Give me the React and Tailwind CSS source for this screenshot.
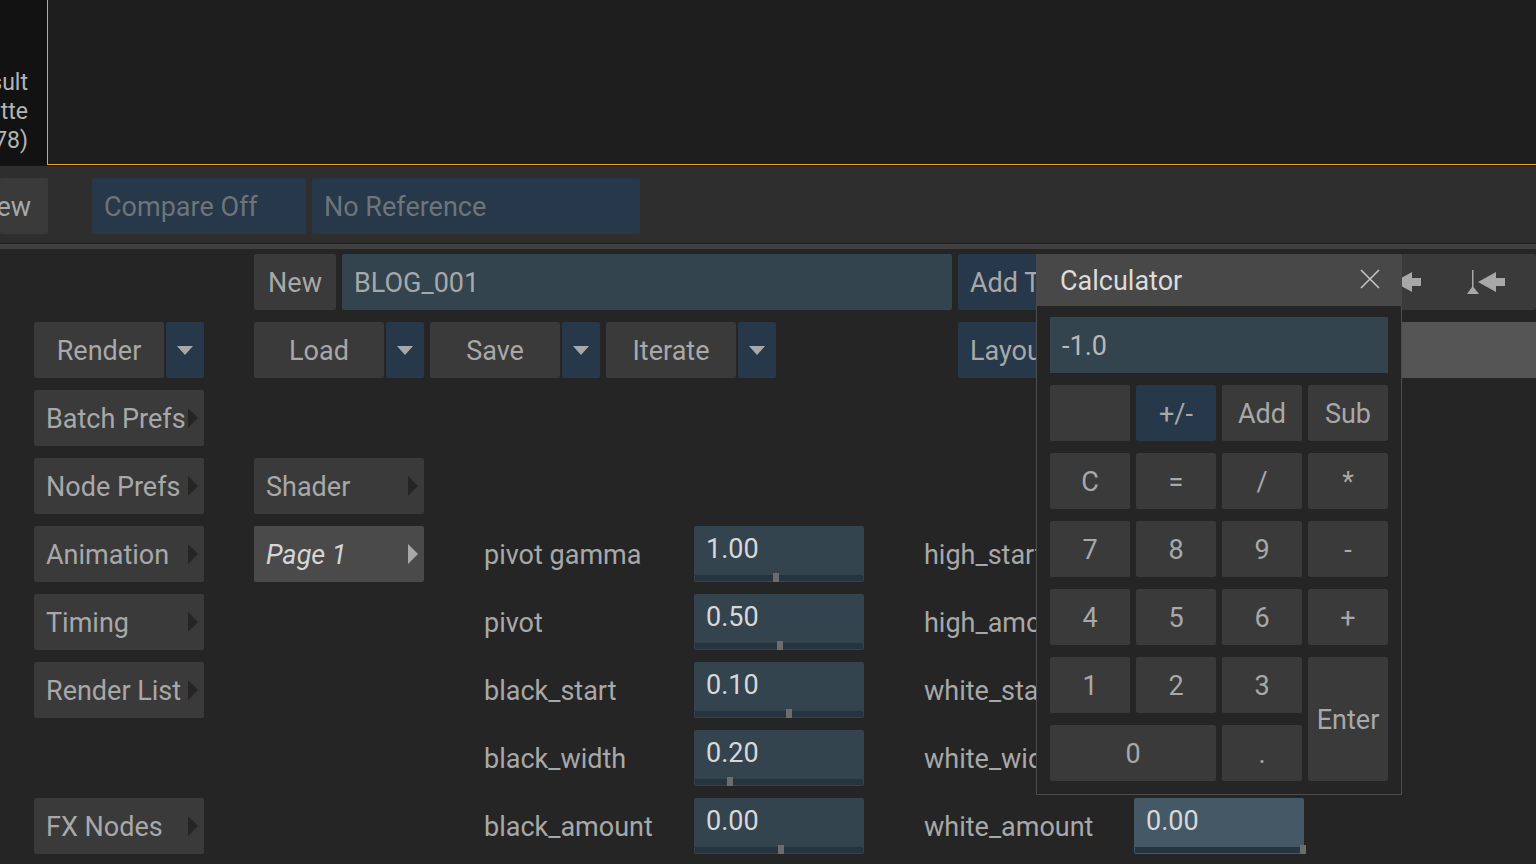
import React from 'react';

const font = { fontFamily: 'Roboto, "Noto Sans", sans-serif' };

function Btn({ children, className = '' }) {
  return (
    <div className={`h-14 shrink-0 rounded-[2px] bg-[#3a3a3a] flex items-center justify-center pt-[2px] text-[27px] text-[#a8a8a8] ${className}`}>
      {children}
    </div>
  );
}

function Arrow({ className = '' }) {
  return (
    <div className={`h-14 w-[38px] shrink-0 rounded-[2px] bg-[#26384a] flex items-center justify-center ${className}`}>
      <div className="w-0 h-0 border-l-[8px] border-r-[8px] border-t-[9px] border-l-transparent border-r-transparent border-t-[#a8a8a8]" />
    </div>
  );
}

function SplitBtn({ label }) {
  return (
    <div className="flex gap-[2px] w-[170px] shrink-0">
      <Btn className="w-[130px]">{label}</Btn>
      <Arrow />
    </div>
  );
}

function MenuBtn({ label, active }) {
  return (
    <div className={`h-14 w-[170px] shrink-0 rounded-[2px] flex items-center justify-between pl-3 pr-[6px] text-[27px] ${active ? 'bg-[#4a4a4a] text-[#d6d6d6] italic' : 'bg-[#3a3a3a] text-[#a8a8a8]'}`}>
      <span className="pt-[2px]">{label}</span>
      <span className={`w-0 h-0 mb-[1px] border-t-[10px] border-b-[10px] border-l-[10px] border-t-transparent border-b-transparent ${active ? 'border-l-[#a8a8a8]' : 'border-l-[#252525]'}`} />
    </div>
  );
}

function Field({ value, pos, active }) {
  return (
    <div className={`relative h-14 w-[170px] shrink-0 rounded-[2px] ${active ? 'bg-[#445866]' : 'bg-[#33444f]'} text-[27px] leading-[47px] pl-3 text-[#d8d8d8]`}>
      {value}
      <div className="absolute left-[1px] right-[1px] bottom-[1px] h-[6px] bg-[#25343f]" />
      <div className="absolute bottom-0 w-[6px] h-[9px] bg-[#6c6c6c]" style={{ left: pos }} />
    </div>
  );
}

function ParamRow({ a, av, ap, b, bv, bp, bactive, extra }) {
  return (
    <div className="flex items-center h-14">
      <div className="w-[210px] shrink-0 pt-[2px] text-[#a8a8a8]">{a}</div>
      <Field value={av} pos={ap} />
      <div className="w-[210px] shrink-0 ml-[60px] pt-[2px] text-[#a8a8a8]">{b}</div>
      {bv && <Field value={bv} pos={bp} active={bactive} />}
      {extra && <div className="ml-[86px] pt-[2px] text-[#a8a8a8]">{extra}</div>}
    </div>
  );
}

const keys = [
  ['', '+/-', 'Add', 'Sub'],
  ['C', '=', '/', '*'],
  ['7', '8', '9', '-'],
  ['4', '5', '6', '+'],
];

function Calculator() {
  return (
    <div className="absolute left-[1036px] top-[254px] w-[366px] h-[541px] border border-[#4c4c4c] bg-[#252525] flex flex-col">
      <div className="h-[52px] shrink-0 -mx-[1px] -mt-[1px] bg-[#484848] flex items-center justify-between pl-6 pr-[22px] text-[27px] text-[#dcdcdc]">
        <span className="pt-[3px]">Calculator</span>
        <svg width="20" height="20" viewBox="0 0 20 20" className="mb-[2px]" fill="none" stroke="#c4c4c4" strokeWidth="1.6">
          <path d="M1 1 L19 19 M19 1 L1 19" />
        </svg>
      </div>
      <div className="px-[13px] pt-[11px]">
        <div className="h-14 bg-[#33444f] flex items-center pl-3 pt-[2px] text-[27px] text-[#b8b8b8]">-1.0</div>
        <div className="mt-3 grid grid-cols-4 gap-x-[6px] gap-y-3">
          {keys.flat().map((k, i) => (
            <Btn key={i} className={k === '+/-' ? 'bg-[#26384a]' : ''}>{k}</Btn>
          ))}
          <Btn>1</Btn>
          <Btn>2</Btn>
          <Btn>3</Btn>
          <Btn className="row-span-2 h-full">Enter</Btn>
          <Btn className="col-span-2">0</Btn>
          <Btn>.</Btn>
        </div>
      </div>
    </div>
  );
}

export default function App() {
  return (
    <div className="relative w-[1536px] h-[864px] overflow-hidden flex flex-col bg-[#252525] whitespace-nowrap" style={font}>
      {/* Viewer */}
      <div className="h-[166px] shrink-0 flex bg-[#1e1e1e] border-b border-[#141414]">
        <div className="w-[47px] shrink-0 bg-[#121212] flex flex-col items-end justify-end pr-[19px] pb-[10px] text-[23px] leading-[29px] text-[#b4b4b4]">
          <span>Result</span>
          <span>Matte</span>
          <span>(1.78)</span>
        </div>
        <div className="flex-1 border-l border-b border-[#eba51f]" />
      </div>

      {/* Toolbar */}
      <div className="h-[77px] shrink-0 bg-[#2e2e2e] flex items-start pt-3">
        <Btn className="w-[48px] justify-end pr-[17px]">Preview</Btn>
        <div className="ml-[44px] h-14 w-[214px] rounded-[2px] bg-[#26384a] pl-3 pt-[2px] flex items-center text-[27px] text-[#6e7478]">Compare Off</div>
        <div className="ml-[6px] h-14 w-[328px] rounded-[2px] bg-[#26384a] pl-3 pt-[2px] flex items-center text-[27px] text-[#6e7478]">No Reference</div>
      </div>
      <div className="h-[6px] shrink-0 bg-[#404040] border-t border-[#1e1e1e]" />

      {/* Panel */}
      <div className="flex-1 flex pl-[34px] pt-[5px] gap-[50px]">
        <div className="flex flex-col gap-3 w-[170px] shrink-0">
          <div className="h-14" />
          <SplitBtn label="Render" />
          <MenuBtn label="Batch Prefs" />
          <MenuBtn label="Node Prefs" />
          <MenuBtn label="Animation" />
          <MenuBtn label="Timing" />
          <MenuBtn label="Render List" />
          <div className="h-14" />
          <MenuBtn label="FX Nodes" />
        </div>

        <div className="flex-1 flex flex-col gap-3 min-w-0 text-[27px]">
          <div className="flex gap-[6px]">
            <Btn className="w-[82px]">New</Btn>
            <div className="h-14 w-[610px] rounded-[2px] bg-[#33444f] flex items-center pl-3 pt-[2px] text-[#a8a8a8]">BLOG_001</div>
            <div className="h-14 w-[170px] rounded-[2px] bg-[#26384a] flex items-center pl-3 pt-[2px] text-[#a8a8a8]">Add To Batch</div>
            <div className="h-14 w-[44px] ml-[174px] rounded-[2px] bg-[#26384a]" />
            <div className="relative h-14 flex-1 ml-[5px] rounded-[2px] bg-[#3a3a3a] flex items-center justify-end gap-[47px] pr-[31px]">
              <svg width="27" height="20" viewBox="0 0 27 20" fill="#a8a8a8" className="mb-[1px]">
                <path d="M0 10 L18 0 V6 H27 V14 H18 V20 Z" />
              </svg>
              <svg width="38" height="24" viewBox="0 0 38 24" fill="#a8a8a8" className="ml-[-1px]">
                <path d="M5 0 H6.5 V17 L12 24 H0 L5 17 Z" />
                <path d="M11 12 L29 2 V8 H38 V16 H29 V22 Z" />
              </svg>
            </div>
          </div>
          <div className="flex gap-[6px]">
            <SplitBtn label="Load" />
            <SplitBtn label="Save" />
            <SplitBtn label="Iterate" />
            <div className="h-14 flex-1 ml-[176px] flex">
              <div className="w-[100px] rounded-[2px] bg-[#26384a] flex items-center pl-3 pt-[2px] text-[#a8a8a8]">Layout</div>
              <div className="flex-1 bg-[#555555]" />
            </div>
          </div>
          <div className="h-14" />
          <MenuBtn label="Shader" />
          <div className="flex gap-[60px]">
            <MenuBtn label="Page 1" active />
            <div className="flex flex-col gap-3">
              <ParamRow a="pivot gamma" av="1.00" ap="79px" b="high_start" extra="Range Mode" />
              <ParamRow a="pivot" av="0.50" ap="83px" b="high_amount" />
              <ParamRow a="black_start" av="0.10" ap="92px" b="white_start" />
              <ParamRow a="black_width" av="0.20" ap="33px" b="white_width" />
              <ParamRow a="black_amount" av="0.00" ap="84px" b="white_amount" bv="0.00" bp="166px" bactive />
            </div>
          </div>
        </div>
      </div>

      <Calculator />
    </div>
  );
}
